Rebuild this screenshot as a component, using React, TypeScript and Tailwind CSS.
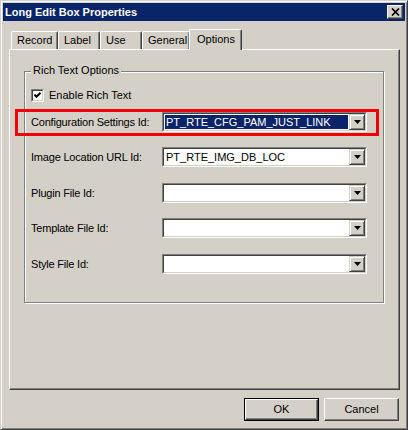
import React from "react";

const tabs = [
  { name: "Record", w: "w-[47px]" },
  { name: "Label", w: "w-[42px]" },
  { name: "Use", w: "w-[42px]" },
  { name: "General", w: "w-[48px]" },
];

const rows = [
  { label: "Configuration Settings Id:", value: "PT_RTE_CFG_PAM_JUST_LINK", selected: true, mt: "mt-[10px]" },
  { label: "Image Location URL Id:", value: "PT_RTE_IMG_DB_LOC", selected: false, mt: "mt-[15px]" },
  { label: "Plugin File Id:", value: "", selected: false, mt: "mt-[16px]" },
  { label: "Template File Id:", value: "", selected: false, mt: "mt-[15px]" },
  { label: "Style File Id:", value: "", selected: false, mt: "mt-[16px]" },
];

function DropArrow() {
  return (
    <svg width="7" height="4" viewBox="0 0 7 4">
      <path d="M0 0h7L3.5 4z" fill="#000" />
    </svg>
  );
}

function Combo({ value, selected }: { value: string; selected: boolean }) {
  return (
    <div className="w-[205px] h-[20px] border border-t-[#808080] border-l-[#808080] border-r-white border-b-white">
      <div className="h-full border border-t-[#404040] border-l-[#404040] border-r-[#d4d0c8] border-b-[#d4d0c8] bg-white flex">
        <div className="flex-1 flex">
          <div
            className={
              selected
                ? "flex-1 m-[1px] bg-[#0a246a] text-white pl-[1px] flex items-center"
                : "flex-1 m-[1px] text-black pl-[1px] flex items-center"
            }
          >
            {value}
          </div>
        </div>
        <div className="w-[16px] h-full bg-[#d4d0c8] border border-t-[#d4d0c8] border-l-[#d4d0c8] border-r-[#404040] border-b-[#404040] shadow-[inset_1px_1px_0_#fff,inset_-1px_-1px_0_#808080] flex items-center justify-center">
          <DropArrow />
        </div>
      </div>
    </div>
  );
}

function Button({ label, isDefault }: { label: string; isDefault?: boolean }) {
  const face = (
    <div className="w-full h-full border border-t-white border-l-white border-r-[#404040] border-b-[#404040] shadow-[inset_-1px_-1px_0_#808080] flex items-center justify-center">
      {label}
    </div>
  );
  return isDefault ? (
    <div className="w-[75px] h-[23px] border border-black">{face}</div>
  ) : (
    <div className="w-[75px] h-[23px]">{face}</div>
  );
}

export default function App() {
  return (
    <div
      className="w-[408px] h-[430px] bg-[#d4d0c8] border border-t-[#d4d0c8] border-l-[#d4d0c8] border-r-[#404040] border-b-[#404040] shadow-[inset_1px_1px_0_#fff,inset_-1px_-1px_0_#808080] p-[2px] text-[11px] text-black flex flex-col"
      style={{ fontFamily: '"Liberation Sans", Arial, sans-serif' }}
    >
      {/* title bar */}
      <div className="h-[18px] bg-[#0a246a] flex items-center justify-between pl-[2px] pr-[2px]">
        <span className="text-white font-bold text-[11px]">Long Edit Box Properties</span>
        <div className="w-[16px] h-[14px] bg-[#d4d0c8] border border-t-white border-l-white border-r-[#404040] border-b-[#404040] shadow-[inset_-1px_-1px_0_#808080] flex items-center justify-center">
          <svg width="9" height="8" viewBox="0 0 9 8">
            <path d="M1 0.5L8 7.5M8 0.5L1 7.5" stroke="#000" strokeWidth="1.7" />
          </svg>
        </div>
      </div>

      {/* tabs */}
      <div className="mt-[8px] ml-[8px] h-[20px] flex items-end relative z-10">
        {tabs.map((t) => (
          <div
            key={t.name}
            className={`${t.w} h-[18px] border-t border-l border-r border-t-white border-l-white border-r-[#404040] shadow-[inset_-1px_0_0_#808080] rounded-t-[2px] pl-[5px] flex items-center whitespace-nowrap`}
          >
            {t.name}
          </div>
        ))}
        <div className="w-[53px] h-[21px] -mb-[1px] -ml-[1px] bg-[#d4d0c8] border-t border-l border-r border-t-white border-l-white border-r-[#404040] shadow-[inset_-1px_0_0_#808080] rounded-t-[2px] pl-[7px] pb-[2px] flex items-center">
          Options
        </div>
      </div>

      {/* tab panel */}
      <div className="ml-[6px] w-[391px] h-[341px] border border-t-white border-l-white border-r-[#404040] border-b-[#404040] shadow-[inset_-1px_-1px_0_#808080]">
        <div className="relative ml-[14px] mt-[21px] w-[360px] h-[232px] border border-[#808080] shadow-[inset_1px_1px_0_#fff,1px_1px_0_#fff]">
          <div className="absolute left-[6px] top-[-8px] px-[2px] bg-[#d4d0c8] leading-[13px]">Rich Text Options</div>

          <div className="pl-[6px] pt-[17px] flex flex-col">
            <div className="h-[13px] flex items-center gap-[5px]">
              <div className="w-[13px] h-[13px] border border-t-[#808080] border-l-[#808080] border-r-white border-b-white">
                <div className="w-full h-full border border-t-[#404040] border-l-[#404040] border-r-[#d4d0c8] border-b-[#d4d0c8] bg-white flex items-center justify-center">
                  <svg width="7" height="7" viewBox="0 0 7 7">
                    <path d="M0.5 2.5L2.5 4.8L6.5 0.8" stroke="#000" strokeWidth="2" fill="none" />
                  </svg>
                </div>
              </div>
              <span>Enable Rich Text</span>
            </div>

            {rows.map((r) => (
              <div key={r.label} className={`${r.mt} relative h-[20px] flex items-center`}>
                {r.selected && (
                  <div className="absolute left-[-16px] top-[-3px] w-[364px] h-[27px] border-[3px] border-[#f20000] pointer-events-none" />
                )}
                <div className="w-[131px] tracking-[-0.2px]">{r.label}</div>
                <Combo value={r.value} selected={r.selected} />
              </div>
            ))}
          </div>
        </div>
      </div>

      {/* buttons */}
      <div className="mt-[8px] ml-[241px] flex gap-[5px]">
        <Button label="OK" isDefault />
        <Button label="Cancel" />
      </div>
    </div>
  );
}
